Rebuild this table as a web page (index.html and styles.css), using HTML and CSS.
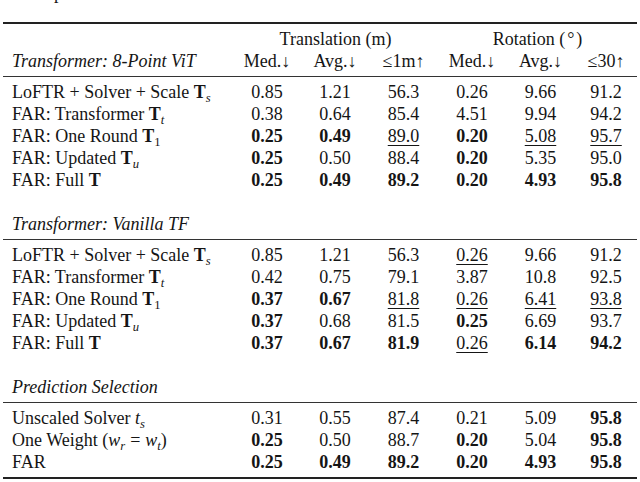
FILE: index.html
```html
<!DOCTYPE html>
<html>
<head>
<meta charset="utf-8">
<link rel="stylesheet" href="styles.css">
</head>
<body>
<div class="prev"><p>improves the results.</p></div>
<table class="res">
<colgroup>
<col class="c-lbl"><col class="c-n"><col class="c-n"><col class="c-w"><col class="c-n"><col class="c-w"><col class="c-l">
</colgroup>
<tr class="top">
<td class="lbl"></td>
<td colspan="3">Translation (m)</td>
<td colspan="3">Rotation (<span class="deg">°</span>)</td>
</tr>
<tr class="rule">
<td class="lbl grp">Transformer: 8-Point ViT</td>
<td>Med.↓</td><td>Avg.↓</td><td>≤1m↑</td><td>Med.↓</td><td>Avg.↓</td><td>≤30↑</td>
</tr>
<tr class="after">
<td class="lbl">LoFTR + Solver + Scale <b>T</b><sub><i>s</i></sub></td>
<td>0.85</td><td>1.21</td><td>56.3</td><td>0.26</td><td>9.66</td><td>91.2</td>
</tr>
<tr>
<td class="lbl">FAR: Transformer <b>T</b><sub><i>t</i></sub></td>
<td>0.38</td><td>0.64</td><td>85.4</td><td>4.51</td><td>9.94</td><td>94.2</td>
</tr>
<tr>
<td class="lbl">FAR: One Round <b>T</b><sub>1</sub></td>
<td class="b">0.25</td><td class="b">0.49</td><td><span class="u">89.0</span></td><td class="b">0.20</td><td><span class="u">5.08</span></td><td><span class="u">95.7</span></td>
</tr>
<tr>
<td class="lbl">FAR: Updated <b>T</b><sub><i>u</i></sub></td>
<td class="b">0.25</td><td>0.50</td><td>88.4</td><td class="b">0.20</td><td>5.35</td><td>95.0</td>
</tr>
<tr>
<td class="lbl">FAR: Full <b>T</b></td>
<td class="b">0.25</td><td class="b">0.49</td><td class="b">89.2</td><td class="b">0.20</td><td class="b">4.93</td><td class="b">95.8</td>
</tr>
<tr class="blank"><td colspan="7"></td></tr>
<tr class="rule">
<td class="lbl grp">Transformer: Vanilla TF</td>
<td></td><td></td><td></td><td></td><td></td><td></td>
</tr>
<tr class="after">
<td class="lbl">LoFTR + Solver + Scale <b>T</b><sub><i>s</i></sub></td>
<td>0.85</td><td>1.21</td><td>56.3</td><td><span class="u">0.26</span></td><td>9.66</td><td>91.2</td>
</tr>
<tr>
<td class="lbl">FAR: Transformer <b>T</b><sub><i>t</i></sub></td>
<td>0.42</td><td>0.75</td><td>79.1</td><td>3.87</td><td>10.8</td><td>92.5</td>
</tr>
<tr>
<td class="lbl">FAR: One Round <b>T</b><sub>1</sub></td>
<td class="b">0.37</td><td class="b">0.67</td><td><span class="u">81.8</span></td><td><span class="u">0.26</span></td><td><span class="u">6.41</span></td><td><span class="u">93.8</span></td>
</tr>
<tr>
<td class="lbl">FAR: Updated <b>T</b><sub><i>u</i></sub></td>
<td class="b">0.37</td><td>0.68</td><td>81.5</td><td class="b">0.25</td><td>6.69</td><td>93.7</td>
</tr>
<tr>
<td class="lbl">FAR: Full <b>T</b></td>
<td class="b">0.37</td><td class="b">0.67</td><td class="b">81.9</td><td><span class="u">0.26</span></td><td class="b">6.14</td><td class="b">94.2</td>
</tr>
<tr class="blank"><td colspan="7"></td></tr>
<tr class="rule">
<td class="lbl grp">Prediction Selection</td>
<td></td><td></td><td></td><td></td><td></td><td></td>
</tr>
<tr class="after">
<td class="lbl">Unscaled Solver <i>t</i><sub><i>s</i></sub></td>
<td>0.31</td><td>0.55</td><td>87.4</td><td>0.21</td><td>5.09</td><td class="b">95.8</td>
</tr>
<tr>
<td class="lbl">One Weight (<i>w</i><sub><i>r</i></sub><span class="eq">=</span><i>w</i><sub><i>t</i></sub>)</td>
<td class="b">0.25</td><td>0.50</td><td>88.7</td><td class="b">0.20</td><td>5.04</td><td class="b">95.8</td>
</tr>
<tr class="end">
<td class="lbl">FAR</td>
<td class="b">0.25</td><td class="b">0.49</td><td class="b">89.2</td><td class="b">0.20</td><td class="b">4.93</td><td class="b">95.8</td>
</tr>
</table>
</body>
</html>
```
FILE: styles.css
```css
body {
  margin: 0;
  background: #fff;
  color: #151515;
  font-family: "Liberation Serif", "Times New Roman", serif;
  font-size: 18px;
}

.prev {
  height: 6px;
  overflow: hidden;
  margin-bottom: 16px;
}

.prev p {
  margin: -17px 0 0 35px;
  line-height: 20px;
}

.res {
  width: 634px;
  margin-left: 3px;
  border-collapse: collapse;
  table-layout: fixed;
}

.c-lbl { width: 230px; }
.c-n { width: 68px; }
.c-w { width: 69px; }
.c-l { width: 62px; }

.res td {
  padding: 0;
  line-height: 22px;
  text-align: center;
  white-space: nowrap;
}

.res td.lbl {
  text-align: left;
  padding-left: 9px;
}

.grp {
  font-style: italic;
}

.top td {
  border-top: 2px solid #222;
  padding-top: 4px;
}

.rule td {
  border-bottom: 1px solid #333;
  padding-bottom: 4px;
}

.after td {
  padding-top: 4px;
}

.end td {
  border-bottom: 2px solid #222;
  padding-bottom: 4px;
}

.blank td {
  height: 22px;
}

.b {
  font-weight: bold;
}

.u {
  text-decoration: underline;
  text-decoration-thickness: 1px;
  text-underline-offset: 3px;
}

sub {
  font-size: 0.7em;
  line-height: 0;
  vertical-align: -0.3em;
}

.eq {
  padding: 0 5px;
}

.deg {
  padding: 0 2px;
}
```
